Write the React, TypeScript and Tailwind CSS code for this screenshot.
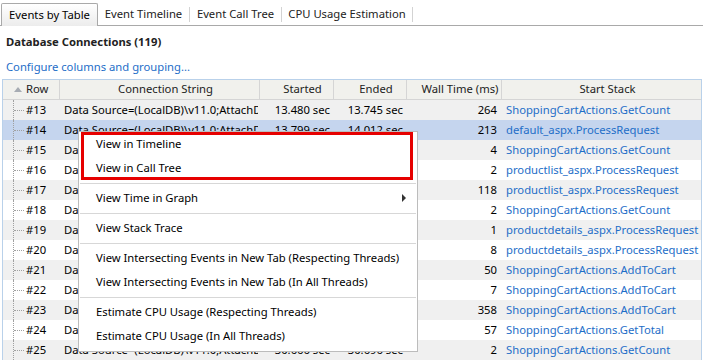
import React from 'react';

const conn = 'Data Source=(LocalDB)\\v11.0;AttachDbFilename=|DataDirectory|\\wingtiptoys.mdf;Integrated Security=True';

const rows = [
  { n: 13, s: '13.480 sec', e: '13.745 sec', w: 264, st: 'ShoppingCartActions.GetCount' },
  { n: 14, s: '13.799 sec', e: '14.012 sec', w: 213, st: 'default_aspx.ProcessRequest' },
  { n: 15, s: '14.030 sec', e: '14.034 sec', w: 4, st: 'ShoppingCartActions.GetCount' },
  { n: 16, s: '16.871 sec', e: '16.873 sec', w: 2, st: 'productlist_aspx.ProcessRequest' },
  { n: 17, s: '16.904 sec', e: '17.022 sec', w: 118, st: 'productlist_aspx.ProcessRequest' },
  { n: 18, s: '17.150 sec', e: '17.152 sec', w: 2, st: 'ShoppingCartActions.GetCount' },
  { n: 19, s: '20.314 sec', e: '20.315 sec', w: 1, st: 'productdetails_aspx.ProcessRequest' },
  { n: 20, s: '20.330 sec', e: '20.338 sec', w: 8, st: 'productdetails_aspx.ProcessRequest' },
  { n: 21, s: '24.602 sec', e: '24.652 sec', w: 50, st: 'ShoppingCartActions.AddToCart' },
  { n: 22, s: '24.660 sec', e: '24.667 sec', w: 7, st: 'ShoppingCartActions.AddToCart' },
  { n: 23, s: '24.701 sec', e: '25.059 sec', w: 358, st: 'ShoppingCartActions.AddToCart' },
  { n: 24, s: '25.110 sec', e: '25.167 sec', w: 57, st: 'ShoppingCartActions.GetTotal' },
  { n: 25, s: '30.666 sec', e: '30.696 sec', w: 2, st: 'ShoppingCartActions.GetCount' },
];

// 'sep' marks a separator line in the context menu
const menu = [
  'View in Timeline',
  'View in Call Tree',
  'sep',
  'View Time in Graph',
  'sep',
  'View Stack Trace',
  'sep',
  'View Intersecting Events in New Tab (Respecting Threads)',
  'View Intersecting Events in New Tab (In All Threads)',
  'sep',
  'Estimate CPU Usage (Respecting Threads)',
  'Estimate CPU Usage (In All Threads)',
];

const cols = 'grid grid-cols-[57px_200px_74px_73px_95px_199px]';

export default function App() {
  return (
    <div className="relative w-[703px] h-[360px] overflow-hidden bg-white text-[11.25px] text-black font-['Noto_Sans',sans-serif]">
      {/* Tabs */}
      <div className="flex items-end h-[26px]">
        <div className="w-px h-full border-b border-[#a9a9a9]" />
        <div className="w-[97px] h-[23px] flex items-center justify-center border border-b-0 border-[#a9a9a9] rounded-t-[2px] bg-gradient-to-b from-white to-[#ececec]">
          Events by Table
        </div>
        <div className="flex-1 h-full flex items-start border-b border-[#a9a9a9] text-[#222]">
          {[
            ['Event Timeline', 'w-[92px]'],
            ['Event Call Tree', 'w-[92px]'],
            ['CPU Usage Estimation', 'w-[131px]'],
          ].map(([t, w]) => (
            <div key={t} className={`${w} h-[21px] mt-[4px] flex items-center`}>
              <span className="flex-1 text-center">{t}</span>
              <div className="w-px h-[15px] bg-[#d3d3d3]" />
            </div>
          ))}
        </div>
      </div>

      <div className="pl-[6px] pt-[7px] h-[18px] leading-[18px] font-bold text-[#222] box-content">Database Connections (119)</div>
      <div className="pl-[6px] pt-[7px] h-[18px] leading-[18px] text-[#1e6ec8] box-content">Configure columns and grouping...</div>

      {/* Table */}
      <div className="mt-[3px] ml-[2px] w-[700px] border-t border-l border-r border-[#b9d1ea]">
        <div className={`${cols} h-[20px] bg-[#f1f1ed] border-b border-[#d5d5d5] text-[#222]`}>
          <div className="flex items-center pl-[11px] border-r border-[#d5d5d5]">
            <svg width="8" height="5" viewBox="0 0 8 5" className="mr-[4px]">
              <path d="M4 0 L8 5 L0 5 Z" fill="#a7acb3" />
            </svg>
            Row
          </div>
          {['Connection String', 'Started', 'Ended', 'Wall Time (ms)', 'Start Stack'].map((h, i) => (
            <div
              key={h}
              className={`flex items-center justify-center pl-[12px] whitespace-nowrap overflow-hidden ${i < 4 ? 'border-r border-[#d5d5d5]' : ''}`}
            >
              {h}
            </div>
          ))}
        </div>

        {rows.map((r) => (
          <div
            key={r.n}
            className={`${cols} h-[20px] leading-[20px] whitespace-nowrap ${
              r.n === 14 ? 'bg-[#c5d5ee]' : r.n % 2 === 1 ? 'bg-[#f0f0f0]' : 'bg-white'
            }`}
          >
            <div className="flex items-stretch">
              <div className="ml-[10px] w-[11px] border-l border-dotted border-[#a0a0a0] flex items-center">
                <div className="w-full border-t border-dotted border-[#a0a0a0]" />
              </div>
              <span className="ml-[2px]">#{r.n}</span>
            </div>
            <div className="pl-[4px] pr-[2px]">
              <div className="overflow-hidden">{conn}</div>
            </div>
            <div className="text-right pr-[4px]">{r.s}</div>
            <div className="text-right pr-[4px]">{r.e}</div>
            <div className="text-right pr-[5px]">{r.w}</div>
            <div className="pl-[4px] overflow-hidden text-[#1e6ec8]">{r.st}</div>
          </div>
        ))}
      </div>

      {/* Context menu */}
      <div className="absolute left-[78px] top-[131px] w-[340px] bg-white border border-[#bcbcbc] pb-[3px]">
        {menu.map((m, i) =>
          m === 'sep' ? (
            <div key={i} className="h-[6px] flex items-center px-[1px]">
              <div className="h-px w-full bg-[#d7d7d7]" />
            </div>
          ) : (
            <div key={i} className="h-[24px] flex items-center pl-[17px] pr-[10px] whitespace-nowrap">
              <span className="flex-1">{m}</span>
              {m === 'View Time in Graph' && (
                <svg width="4" height="8" viewBox="0 0 4 8" className="mr-[1px]">
                  <path d="M0 0 L4 4 L0 8 Z" fill="#333" />
                </svg>
              )}
            </div>
          )
        )}
        <div className="absolute left-[2px] top-0 w-[332px] h-[48px] border-[3px] border-[#e60000]" />
      </div>
    </div>
  );
}
